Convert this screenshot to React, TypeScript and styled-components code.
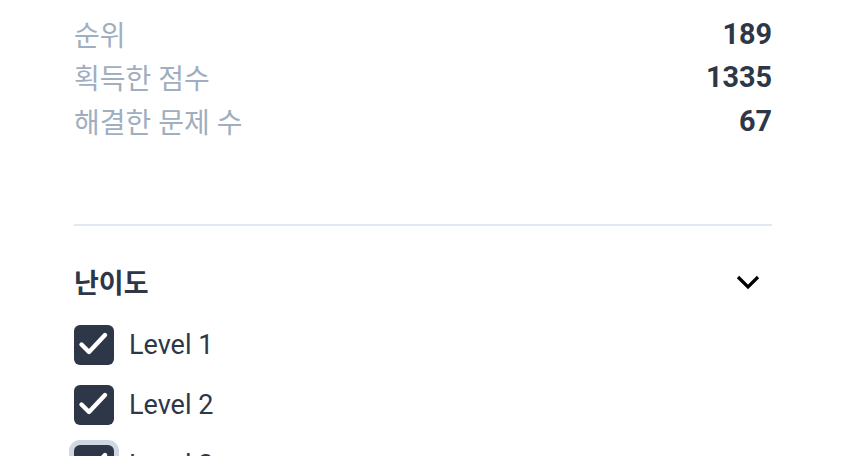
import React from "react";
import styled, { createGlobalStyle } from "styled-components";

const GlobalStyle = createGlobalStyle`
  body {
    margin: 0;
    background: #ffffff;
    font-family: Roboto, "Noto Sans CJK KR", sans-serif;
  }
`;

const Page = styled.div`
  width: 698px;
  padding: 12px 0 0 74px;
  height: 456px;
  overflow: hidden;
  box-sizing: content-box;
`;

const StatList = styled.dl`
  margin: 0;
`;

const StatRow = styled.div`
  display: flex;
  justify-content: space-between;
  align-items: center;
  height: 43.5px;
`;

const StatLabel = styled.dt`
  color: #a0aec0;
  font-size: 28px;
  font-weight: 400;
`;

const StatValue = styled.dd`
  margin: 0;
  color: #2d3748;
  font-size: 28.8px;
  font-weight: 700;
`;

const Divider = styled.hr`
  margin: 81px 0 0;
  border: none;
  height: 2px;
  background: #e2e8f0;
`;

const FilterHeader = styled.div`
  display: flex;
  justify-content: space-between;
  align-items: center;
  height: 44px;
  margin-top: 34px;
`;

const FilterTitle = styled.h3`
  margin: 0;
  font-size: 27px;
  font-weight: 700;
  color: #2d3748;
`;

const ToggleButton = styled.button`
  display: flex;
  align-items: center;
  justify-content: center;
  width: 36px;
  height: 36px;
  margin-right: 6px;
  padding: 0;
  border: none;
  background: transparent;
`;

const OptionList = styled.div`
  display: flex;
  flex-direction: column;
  gap: 20px;
  margin-top: 21px;
`;

const OptionRow = styled.label`
  display: flex;
  align-items: center;
  gap: 15px;
  font-size: 27px;
  color: #2d3748;
`;

const Box = styled.span<{ $focused?: boolean }>`
  display: flex;
  width: 40px;
  height: 40px;
  border-radius: 6px;
  background: #2d3748;
  box-shadow: ${(p) => (p.$focused ? "0 0 0 5px #cfd8e2" : "none")};
`;

const Check = () => (
  <svg width="40" height="40" viewBox="0 0 40 40" fill="none">
    <path
      d="M7.5 19.5 L15 27 L31 10"
      stroke="#ffffff"
      strokeWidth="4.4"
      strokeLinecap="round"
      strokeLinejoin="round"
    />
  </svg>
);

const stats = [
  { label: "순위", value: 189 },
  { label: "획득한 점수", value: 1335 },
  { label: "해결한 문제 수", value: 67 },
];

const levels = ["Level 1", "Level 2", "Level 3", "Level 4"];

export default function App() {
  return (
    <Page>
      <GlobalStyle />
      <StatList>
        {stats.map((s) => (
          <StatRow key={s.label}>
            <StatLabel>{s.label}</StatLabel>
            <StatValue>{s.value}</StatValue>
          </StatRow>
        ))}
      </StatList>
      <Divider />
      <FilterHeader>
        <FilterTitle>난이도</FilterTitle>
        <ToggleButton aria-label="toggle">
          <svg width="26" height="26" viewBox="0 0 26 26" fill="none">
            <path d="M3 8 L13 18 L23 8" stroke="#000000" strokeWidth="3.2" />
          </svg>
        </ToggleButton>
      </FilterHeader>
      <OptionList>
        {levels.map((lv, i) => (
          <OptionRow key={lv}>
            <Box $focused={i === 2}>
              <Check />
            </Box>
            {lv}
          </OptionRow>
        ))}
      </OptionList>
    </Page>
  );
}
